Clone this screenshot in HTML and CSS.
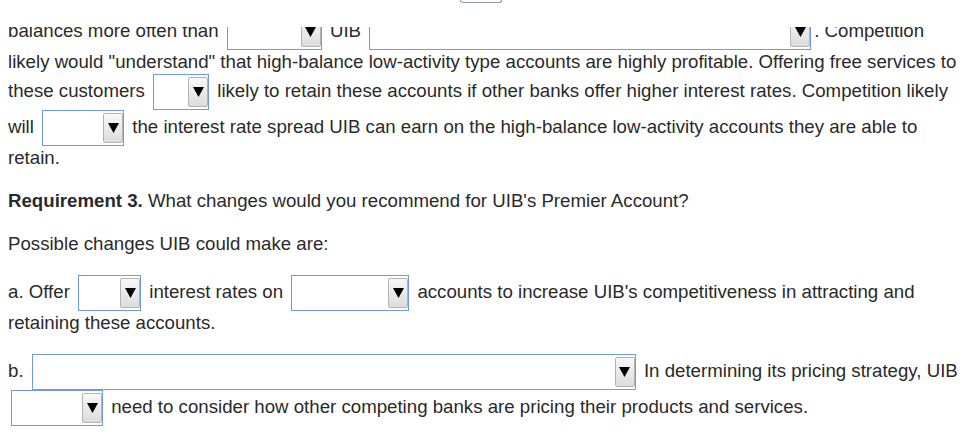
FILE: index.html
```html
<!DOCTYPE html>
<html lang="en">
<head>
<meta charset="utf-8">
<title>Requirement 3</title>
<link rel="stylesheet" href="styles.css">
</head>
<body>
<div class="topbar"><span class="tb-btn"></span></div>
<div class="viewport">
  <div class="inner">
    <p class="para">balances more often than <span class="sel w95"><span class="btn"><svg width="11" height="10" viewBox="0 0 11 10"><path d="M0 0H11L5.5 10Z" fill="#000"/></svg></span></span> UIB <span class="sel w441"><span class="btn"><svg width="11" height="10" viewBox="0 0 11 10"><path d="M0 0H11L5.5 10Z" fill="#000"/></svg></span></span>. Competition<br>likely would "understand" that high-balance low-activity type accounts are highly profitable. Offering free services to<br>these customers <span class="sel w56"><span class="btn"><svg width="11" height="10" viewBox="0 0 11 10"><path d="M0 0H11L5.5 10Z" fill="#000"/></svg></span></span> likely to retain these accounts if other banks offer higher interest rates. Competition likely<br>will <span class="sel w81"><span class="btn"><svg width="11" height="10" viewBox="0 0 11 10"><path d="M0 0H11L5.5 10Z" fill="#000"/></svg></span></span> the interest rate spread UIB can earn on the high-balance low-activity accounts they are able to<br>retain.</p>
    <p class="para"><b>Requirement 3.</b> What changes would you recommend for UIB's Premier Account?</p>
    <p class="para">Possible changes UIB could make are:</p>
    <p class="para">a. Offer <span class="sel w63"><span class="btn"><svg width="11" height="10" viewBox="0 0 11 10"><path d="M0 0H11L5.5 10Z" fill="#000"/></svg></span></span> interest rates on <span class="sel w118"><span class="btn"><svg width="11" height="10" viewBox="0 0 11 10"><path d="M0 0H11L5.5 10Z" fill="#000"/></svg></span></span> accounts to increase UIB's competitiveness in attracting and<br>retaining these accounts.</p>
    <p class="para">b. <span class="sel w604"><span class="btn"><svg width="11" height="10" viewBox="0 0 11 10"><path d="M0 0H11L5.5 10Z" fill="#000"/></svg></span></span> In determining its pricing strategy, UIB<br><span class="sel w92"><span class="btn"><svg width="11" height="10" viewBox="0 0 11 10"><path d="M0 0H11L5.5 10Z" fill="#000"/></svg></span></span> need to consider how other competing banks are pricing their products and services.</p>
  </div>
</div>
</body>
</html>
```
FILE: styles.css
```css
html, body {
  margin: 0;
  padding: 0;
  background: #ffffff;
}

body {
  font-family: "Liberation Sans", Arial, sans-serif;
  font-size: 18.67px;
  color: #2a2a2a;
}

.topbar {
  height: 27px;
  background: #ffffff;
  display: flex;
  align-items: flex-start;
}

.tb-btn {
  display: block;
  margin-left: 460px;
  width: 42px;
  height: 3px;
  box-sizing: border-box;
  border: 1px solid #8e959c;
  border-top: none;
  border-radius: 0 0 5px 5px;
}

.viewport {
  height: 412px;
  overflow: hidden;
  padding: 0 8px;
}

.inner {
  margin-top: -13px;
}

.para {
  margin: 0 0 19px;
  line-height: 24px;
  white-space: nowrap;
}

.sel {
  display: inline-flex;
  justify-content: flex-end;
  align-items: center;
  box-sizing: border-box;
  height: 36px;
  border: 1px solid #6f9be4;
  background: #ffffff;
  margin: 0 3px;
  vertical-align: middle;
}

.btn {
  display: flex;
  align-items: center;
  justify-content: center;
  box-sizing: border-box;
  width: 20px;
  height: 30px;
  border: 1px solid #b3b3b3;
  border-radius: 2px;
  background: linear-gradient(#f8f8f8, #dcdcdc);
}

.w56 { width: 56px; }
.w63 { width: 63px; }
.w81 { width: 82px; }
.w92 { width: 92px; }
.w95 { width: 95px; }
.w118 { width: 118px; }
.w441 { width: 442px; }
.w604 { width: 604px; }
```
